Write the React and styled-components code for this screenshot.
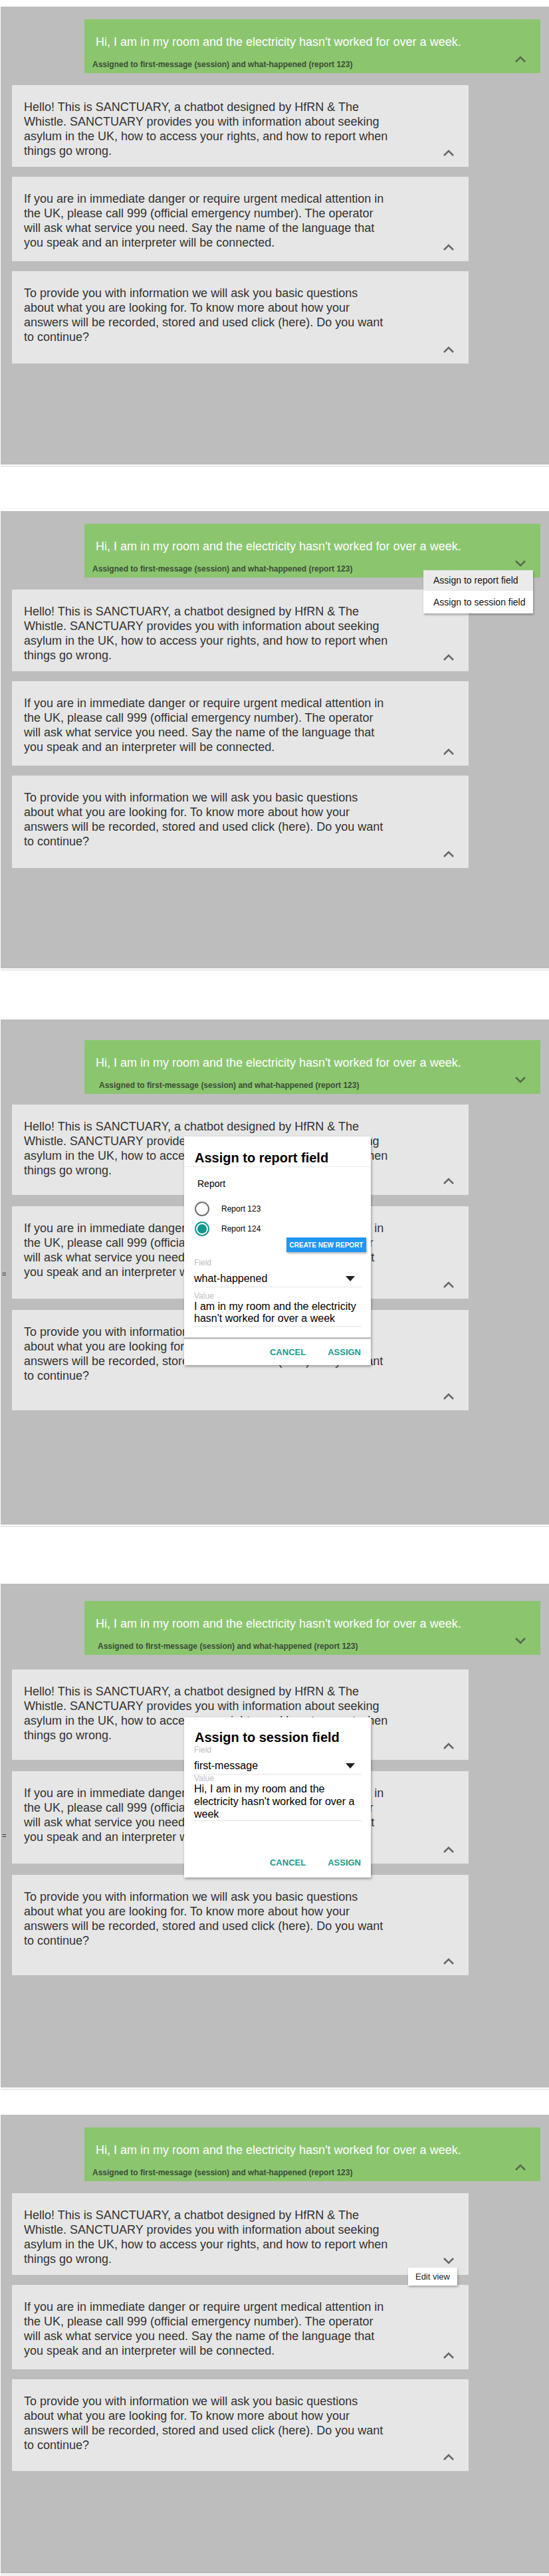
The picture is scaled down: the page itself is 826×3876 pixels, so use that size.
import styled, { createGlobalStyle } from "styled-components";

const GlobalStyle = createGlobalStyle`
  html, body {
    margin: 0;
    padding: 0;
    background: #ffffff;
  }
  body {
    width: 826px;
    font-family: "Liberation Sans", Arial, Helvetica, sans-serif;
  }
  * {
    box-sizing: border-box;
  }
`;

const Shot = styled.section`
  margin-top: ${(p) => p.$top}px;
  margin-left: 1px;
  padding-bottom: 2px;
  border-bottom: 1px solid #d6d6d6;
`;

const Screen = styled.div`
  position: relative;
  height: ${(p) => p.$height}px;
  background: #bdbdbd;
  padding-top: ${(p) => p.$padTop}px;
  display: flex;
  flex-direction: column;
`;

const Green = styled.div`
  position: relative;
  margin-left: 126px;
  width: 686px;
  height: 81px;
  background: #8bc66f;
  padding: 23px 21px 0 17px;
`;

const Message = styled.div`
  color: #ffffff;
  font-size: 18px;
  line-height: 22px;
`;

const GreenFoot = styled.div`
  display: flex;
  justify-content: space-between;
  align-items: flex-end;
  margin-top: 10px;
`;

const Assigned = styled.div`
  margin-left: ${(p) => p.$shift}px;
  margin-bottom: 6px;
  font-size: 12px;
  line-height: 14px;
  font-weight: 700;
  color: #3c4d36;
`;

const Toggle = styled.svg`
  display: block;
  flex: none;
  align-self: flex-end;
  margin-bottom: 16px;
`;

const Thread = styled.div`
  display: flex;
  flex-direction: column;
  gap: ${(p) => p.$gap}px;
  margin-top: ${(p) => p.$lead}px;
  margin-left: 17px;
  width: 687px;
`;

const Bubble = styled.div`
  position: relative;
  display: flex;
  justify-content: space-between;
  background: #e6e6e6;
  padding: 22px 21px 0 18px;
`;

const BubbleText = styled.div`
  width: 551px;
  flex: none;
  align-self: flex-start;
  padding-bottom: ${(p) => p.$pb}px;
  font-size: 18px;
  line-height: 22px;
  color: #333333;
`;

const Menu = styled.div`
  position: absolute;
  top: 70px;
  right: 11px;
  z-index: 3;
  width: 165px;
  background: #ffffff;
  box-shadow: 1px 2px 3px rgba(0, 0, 0, 0.3);
`;

const MenuItem = styled.div`
  height: ${(p) => p.$h}px;
  line-height: ${(p) => p.$h}px;
  padding: 0 15px;
  font-size: 14px;
  color: #111111;
  background: ${(p) => (p.$hover ? "#ebebeb" : "#ffffff")};
  white-space: nowrap;
`;

const Tip = styled.div`
  position: absolute;
  top: 112px;
  right: 17px;
  z-index: 3;
  height: 27px;
  line-height: 27px;
  padding: 0 11px;
  background: #ffffff;
  box-shadow: 1px 2px 3px rgba(0, 0, 0, 0.3);
  font-size: 13px;
  color: #222222;
  white-space: nowrap;
`;

const Handle = styled.div`
  position: absolute;
  left: 2px;
  top: ${(p) => p.$top}px;
  font-size: 11px;
  line-height: 12px;
  color: #333333;
`;

const Dialog = styled.div`
  position: absolute;
  left: 276px;
  top: ${(p) => p.$top}px;
  z-index: 4;
  width: 281px;
  background: #ffffff;
  color: #000000;
  box-shadow: 1px 2px 4px rgba(0, 0, 0, 0.35);
`;

const DialogTitle = styled.h2`
  margin: 0;
  padding: ${(p) => p.$pt}px 16px 0;
  font-size: 20px;
  line-height: 24px;
  font-weight: 700;
`;

const TitleRule = styled.div`
  height: 1px;
  margin-top: 1px;
  background: #ececec;
`;

const GroupLabel = styled.div`
  margin-top: 17px;
  padding-left: 20px;
  font-size: 14px;
  line-height: 16px;
`;

const RadioList = styled.div`
  display: flex;
  flex-direction: column;
  gap: 8px;
  margin-top: 19px;
  padding-left: 16px;
`;

const RadioRow = styled.label`
  display: flex;
  align-items: center;
  gap: 18px;
  font-size: 12px;
`;

const Radio = styled.span`
  width: 22px;
  height: 22px;
  flex: none;
  border-radius: 50%;
  border: 2px solid ${(p) => (p.$on ? "#12968a" : "#707070")};
  display: flex;
  align-items: center;
  justify-content: center;

  &::after {
    content: "";
    width: 14px;
    height: 14px;
    border-radius: 50%;
    background: ${(p) => (p.$on ? "#12968a" : "transparent")};
  }
`;

const ButtonRow = styled.div`
  display: flex;
  justify-content: flex-end;
  margin-top: 2px;
  padding-right: 7px;
`;

const CreateButton = styled.button`
  height: 22px;
  width: 120px;
  padding: 0;
  border: none;
  background: #2196f3;
  color: #ffffff;
  font-family: inherit;
  font-size: 10px;
  font-weight: 700;
  text-transform: uppercase;
  box-shadow: 1px 2px 3px rgba(0, 0, 0, 0.3);
`;

const Fields = styled.div`
  padding: 0 14px 0 15px;
`;

const FieldLabel = styled.div`
  margin-top: ${(p) => p.$mt}px;
  font-size: 12px;
  line-height: ${(p) => p.$lh || 14}px;
  color: #bdbdbd;
`;

const Select = styled.div`
  display: flex;
  justify-content: space-between;
  align-items: center;
  margin-top: 8px;
  padding-bottom: 3px;
  border-bottom: 1px solid #e4e4e4;
  font-size: 16px;
  line-height: 18px;
`;

const Caret = styled.svg`
  display: block;
  margin-right: 10px;
`;

const Value = styled.div`
  padding-bottom: ${(p) => p.$pb}px;
  border-bottom: 1px solid #e4e4e4;
  font-size: 16px;
  line-height: ${(p) => p.$lh}px;
`;

const ActionRule = styled.div`
  height: 3px;
  margin-top: 16px;
  background: #c4c4c4;
`;

const Actions = styled.div`
  display: flex;
  justify-content: flex-end;
  gap: 33px;
  padding: ${(p) => p.$pt}px 15px ${(p) => p.$pb}px;
`;

const Action = styled.span`
  font-size: 13px;
  line-height: 16px;
  font-weight: 700;
  color: #1a9a8c;
  text-transform: uppercase;
`;

const messages = [
  "Hello! This is SANCTUARY, a chatbot designed by HfRN & The Whistle. SANCTUARY provides you with information about seeking asylum in the UK, how to access your rights, and how to report when things go wrong.",
  "If you are in immediate danger or require urgent medical attention in the UK, please call 999 (official emergency number). The operator will ask what service you need. Say the name of the language that you speak and an interpreter will be connected.",
  "To provide you with information we will ask you basic questions about what you are looking for. To know more about how your answers will be recorded, stored and used click (here). Do you want to continue?",
];

const shots = [
  { top: 10, height: 689, padTop: 19, lead: 18, gap: 15, up: true, pads: [13, 17, 29], shift: -5 },
  { top: 67, height: 688, padTop: 19, lead: 18, gap: 15, up: false, pads: [13, 17, 29], shift: -5, menu: true },
  { top: 74, height: 760, padTop: 31, lead: 16, gap: 17, up: false, pads: [26, 29, 41], shift: 5, dialog: "report", handle: 377 },
  { top: 86, height: 758, padTop: 26, lead: 22, gap: 17, up: false, pads: [26, 29, 41], shift: 3, dialog: "session", handle: 373 },
  { top: 38, height: 690, padTop: 19, lead: 18, gap: 15, up: true, pads: [13, 17, 28], shift: -5, tip: true },
];

function Chevron({ up, color }) {
  return (
    <Toggle width="18" height="10" viewBox="0 0 18 10">
      <polyline
        points={up ? "2,9 9,2 16,9" : "2,1 9,8 16,1"}
        fill="none"
        stroke={color}
        strokeWidth="2.6"
      />
    </Toggle>
  );
}

function DropCaret() {
  return (
    <Caret width="14" height="8" viewBox="0 0 14 8">
      <polygon points="0,0 14,0 7,8" fill="#222" />
    </Caret>
  );
}

function ReportDialog() {
  return (
    <Dialog $top={176}>
      <DialogTitle $pt={20}>Assign to report field</DialogTitle>
      <TitleRule />
      <GroupLabel>Report</GroupLabel>
      <RadioList>
        <RadioRow>
          <Radio />
          Report 123
        </RadioRow>
        <RadioRow>
          <Radio $on />
          Report 124
        </RadioRow>
      </RadioList>
      <ButtonRow>
        <CreateButton type="button">Create new report</CreateButton>
      </ButtonRow>
      <Fields>
        <FieldLabel $mt={9}>Field</FieldLabel>
        <Select>
          what-happened
          <DropCaret />
        </Select>
        <FieldLabel $mt={6}>Value</FieldLabel>
        <Value $lh={18} $pb={2}>
          I am in my room and the electricity hasn't worked for over a week
        </Value>
      </Fields>
      <ActionRule />
      <Actions $pt={12} $pb={11}>
        <Action>Cancel</Action>
        <Action>Assign</Action>
      </Actions>
    </Dialog>
  );
}

function SessionDialog() {
  return (
    <Dialog $top={201}>
      <DialogTitle $pt={18}>Assign to session field</DialogTitle>
      <Fields>
        <FieldLabel $mt={0}>Field</FieldLabel>
        <Select>
          first-message
          <DropCaret />
        </Select>
        <FieldLabel $mt={0} $lh={12}>
          Value
        </FieldLabel>
        <Value $lh={19} $pb={0}>
          Hi, I am in my room and the electricity hasn't worked for over a week
        </Value>
      </Fields>
      <Actions $pt={55} $pb={14}>
        <Action>Cancel</Action>
        <Action>Assign</Action>
      </Actions>
    </Dialog>
  );
}

function ChatShot({ shot }) {
  return (
    <Shot $top={shot.top}>
      <Screen $height={shot.height} $padTop={shot.padTop}>
        <Green>
          <Message>
            Hi, I am in my room and the electricity hasn't worked for over a
            week.
          </Message>
          <GreenFoot>
            <Assigned $shift={shot.shift}>
              Assigned to first-message (session) and what-happened (report
              123)
            </Assigned>
            <Chevron up={shot.up} color="#566b4c" />
          </GreenFoot>
          {shot.menu && (
            <Menu>
              <MenuItem $h={31} $hover>
                Assign to report field
              </MenuItem>
              <MenuItem $h={34}>Assign to session field</MenuItem>
            </Menu>
          )}
        </Green>
        <Thread $lead={shot.lead} $gap={shot.gap}>
          {messages.map((text, i) => (
            <Bubble key={i}>
              <BubbleText $pb={shot.pads[i]}>{text}</BubbleText>
              <Chevron up={!(shot.tip && i === 0)} color="#686868" />
              {shot.tip && i === 0 && <Tip>Edit view</Tip>}
            </Bubble>
          ))}
        </Thread>
        {shot.handle && <Handle $top={shot.handle}>=</Handle>}
        {shot.dialog === "report" && <ReportDialog />}
        {shot.dialog === "session" && <SessionDialog />}
      </Screen>
    </Shot>
  );
}

export default function App() {
  return (
    <>
      <GlobalStyle />
      {shots.map((shot, i) => (
        <ChatShot key={i} shot={shot} />
      ))}
    </>
  );
}
